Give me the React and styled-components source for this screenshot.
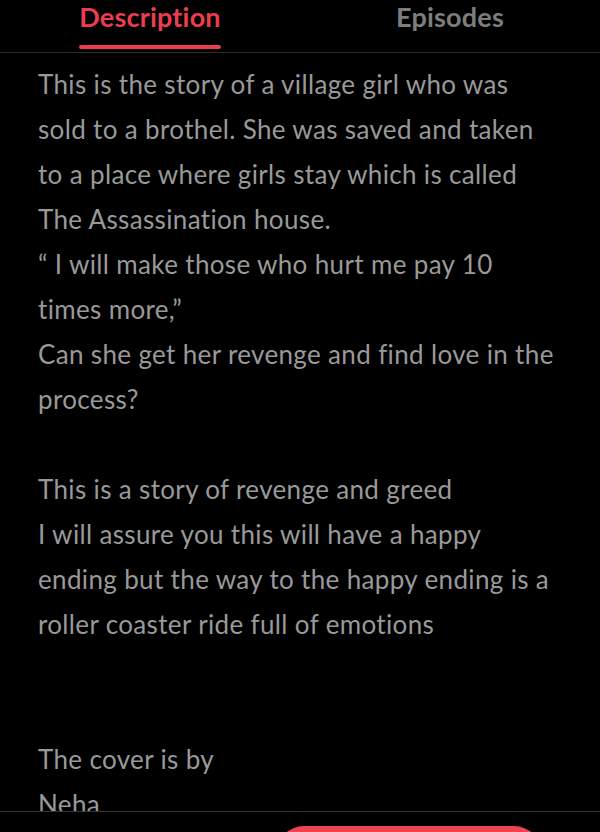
import styled, { createGlobalStyle } from 'styled-components';

const GlobalStyle = createGlobalStyle`
  html, body {
    margin: 0;
    padding: 0;
    background: #000;
    overflow: hidden;
  }
  body {
    font-family: 'Lato', 'Noto Sans', sans-serif;
  }
`;

const Screen = styled.div`
  display: flex;
  flex-direction: column;
  background: #000;
  width: 600px;
`;

const TabBar = styled.div`
  display: grid;
  grid-template-columns: 1fr 1fr;
  height: 53px;
  border-bottom: 1px solid #2b2b2b;
  box-sizing: border-box;
`;

const Tab = styled.button`
  display: flex;
  justify-content: center;
  align-items: flex-start;
  background: none;
  border: none;
  padding: 0;
  cursor: pointer;
`;

const TabLabel = styled.span`
  display: inline-flex;
  flex-direction: column;
  align-items: stretch;
  gap: 12px;
  font-family: 'Lato', sans-serif;
  font-weight: 700;
  font-size: 27px;
  line-height: 33px;
  letter-spacing: 0.2px;
  color: ${p => (p.$active ? '#ec3d50' : '#7d7d7d')};
`;

const Indicator = styled.span`
  height: 4px;
  border-radius: 2px;
  background: ${p => (p.$active ? '#ec3d50' : 'transparent')};
`;

const Content = styled.div`
  height: 758px;
  overflow: hidden;
  padding: 9px 38px 0;
  box-sizing: border-box;
`;

const Paragraph = styled.p`
  margin: 0;
  font-family: 'Lato', sans-serif;
  font-size: 26px;
  line-height: 45px;
  letter-spacing: 0.35px;
  color: #999;
  white-space: pre-line;
`;

const Footer = styled.div`
  display: flex;
  justify-content: flex-end;
  border-top: 1px solid #353535;
  padding: 14px 58px 20px 0;
`;

const ReadButton = styled.button`
  width: 266px;
  height: 56px;
  border: none;
  border-radius: 28px;
  background: #ef4352;
  color: #fff;
  font-family: 'Lato', sans-serif;
  font-weight: 700;
  font-size: 20px;
`;

const description = `This is the story of a village girl who was
sold to a brothel. She was saved and taken
to a place where girls stay which is called
The Assassination house.
\u201C I will make those who hurt me pay 10
times more,\u201D
Can she get her revenge and find love in the
process?

This is a story of revenge and greed
I will assure you this will have a happy
ending but the way to the happy ending is a
roller coaster ride full of emotions


The cover is by
Neha`;

export default function App() {
  return (
    <>
      <GlobalStyle />
      <Screen>
        <TabBar>
          <Tab>
            <TabLabel $active>
              Description
              <Indicator $active />
            </TabLabel>
          </Tab>
          <Tab>
            <TabLabel>
              Episodes
              <Indicator />
            </TabLabel>
          </Tab>
        </TabBar>
        <Content>
          <Paragraph>{description}</Paragraph>
        </Content>
        <Footer>
          <ReadButton>Read</ReadButton>
        </Footer>
      </Screen>
    </>
  );
}
